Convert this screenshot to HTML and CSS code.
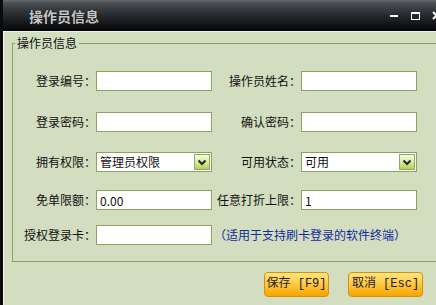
FILE: index.html
```html
<!DOCTYPE html>
<html lang="zh-CN">
<head>
<meta charset="utf-8">
<title>操作员信息</title>
<link rel="stylesheet" href="styles.css">
</head>
<body>
<div class="window">
  <div class="titlebar">
    <span class="title">操作员信息</span>
    <div class="controls">
      <span class="ctl ctl-min"></span>
      <span class="ctl ctl-max"></span>
      <svg class="ctl ctl-close" width="9" height="9" viewBox="0 0 9 9"><path d="M1 1L8 8M8 1L1 8" stroke="#fff" stroke-width="2" fill="none"/></svg>
    </div>
  </div>
  <div class="content">
    <fieldset class="group">
      <legend class="legend">操作员信息</legend>
      <div class="form">
        <label class="lbl">登录编号：</label><input class="inp" type="text" value="">
        <label class="lbl">操作员姓名：</label><input class="inp" type="text" value="">

        <label class="lbl">登录密码：</label><input class="inp" type="text" value="">
        <label class="lbl">确认密码：</label><input class="inp" type="text" value="">

        <label class="lbl">拥有权限：</label>
        <div class="sel"><span class="sel-text">管理员权限</span><span class="sel-btn"><svg width="10" height="7" viewBox="0 0 10 7"><path d="M1.5 1.5L5 5L8.5 1.5" stroke="#2a2a2a" stroke-width="2.2" fill="none"/></svg></span></div>
        <label class="lbl">可用状态：</label>
        <div class="sel"><span class="sel-text">可用</span><span class="sel-btn"><svg width="10" height="7" viewBox="0 0 10 7"><path d="M1.5 1.5L5 5L8.5 1.5" stroke="#2a2a2a" stroke-width="2.2" fill="none"/></svg></span></div>

        <label class="lbl">免单限额：</label><input class="inp" type="text" value="0.00">
        <label class="lbl">任意打折上限：</label><input class="inp" type="text" value="1">

        <label class="lbl">授权登录卡：</label><input class="inp" type="text" value="">
        <span class="note">（适用于支持刷卡登录的软件终端）</span>
      </div>
    </fieldset>
    <div class="actions">
      <button class="btn btn-save">保存 [F9]</button>
      <button class="btn btn-cancel">取消 [Esc]</button>
    </div>
  </div>
</div>
</body>
</html>
```

FILE: styles.css
```css
* { box-sizing: border-box; }

body {
  margin: 0;
  width: 436px;
  height: 305px;
  overflow: hidden;
  background: #000;
  font-family: "Noto Sans CJK SC", "Noto Sans", sans-serif;
}

.window {
  width: 446px;
  height: 305px;
  background: #d3ddbf;
  border-left: 3px solid #0b0b0b;
}

.titlebar {
  height: 32px;
  border-bottom: 1px solid #f2f3ee;
  background: linear-gradient(#66696e 0, #4a4d52 3px, #2a2d31 45%, #0e1012 85%, #050505 100%);
  display: flex;
  align-items: center;
  padding: 0 5px 0 26px;
}

.title {
  font-size: 14px;
  font-weight: bold;
  line-height: 16px;
  color: #c6c6c6;
  text-shadow: 0 0 1px #000;
  margin-top: 1px;
}

.controls {
  margin-left: auto;
  display: flex;
  align-items: center;
}

.ctl { display: block; }

.ctl-min {
  width: 8px;
  height: 2px;
  background: #fff;
  margin-top: 1px;
}

.ctl-max {
  width: 9px;
  height: 8px;
  border: 1px solid #fff;
  border-top-width: 2px;
  margin-left: 13px;
}

.ctl-close {
  margin-left: 12px;
}

.content {
  height: 273px;
  box-shadow: inset 1px 0 0 #f2f2f2;
  padding-top: 4px;
}

.group {
  margin: 0 0 0 9px;
  padding: 21px 0 16px 0;
  border: 1px solid #8c9f5d;
  min-width: 0;
}

.legend {
  margin-left: 2px;
  padding: 0 2px;
  font-size: 12px;
  line-height: 14px;
  color: #111;
}

.form {
  display: grid;
  grid-template-columns: 83px 116px 89px 116px;
  grid-template-rows: 41px 40px 38px 35px 20px;
  align-items: start;
}

.lbl {
  height: 20px;
  line-height: 20px;
  font-size: 12px;
  color: #111;
  text-align: right;
  white-space: nowrap;
}

.inp {
  display: block;
  width: 116px;
  height: 20px;
  margin: 0;
  border: 1px solid #8ea25f;
  background: #fff;
  padding: 0 3px;
  font-family: "Noto Sans CJK SC", "Noto Sans", sans-serif;
  font-size: 12px;
  line-height: 18px;
  color: #111;
  outline: none;
}

.sel {
  width: 116px;
  height: 20px;
  border: 1px solid #8ea25f;
  background: #fff;
  display: flex;
  align-items: center;
  padding-left: 3px;
}

.sel-text {
  font-size: 12px;
  line-height: 18px;
  color: #111;
  flex: 1;
}

.sel-btn {
  width: 16px;
  height: 16px;
  margin-right: 1px;
  border: 1px solid #93a866;
  background: linear-gradient(#f6fcde, #d8eda0 50%, #aed35a);
  display: flex;
  align-items: center;
  justify-content: center;
}

.sel-btn svg { display: block; }

.note {
  grid-column: 3 / 5;
  height: 20px;
  line-height: 20px;
  font-size: 12px;
  color: #112a9e;
  padding-left: 2px;
  white-space: nowrap;
}

.actions {
  display: flex;
  justify-content: flex-end;
  gap: 19px;
  margin-top: 10px;
  padding-right: 23px;
}

.btn {
  height: 25px;
  padding: 0;
  border: 1px solid #d98f0e;
  border-radius: 4px;
  background: linear-gradient(#ffe680, #ffca45 45%, #f6a500);
  font-family: "Liberation Mono", "Noto Sans CJK SC", monospace;
  font-size: 12px;
  color: #222;
  line-height: 23px;
}

.btn-save { width: 65px; }
.btn-cancel { width: 75px; }
```
